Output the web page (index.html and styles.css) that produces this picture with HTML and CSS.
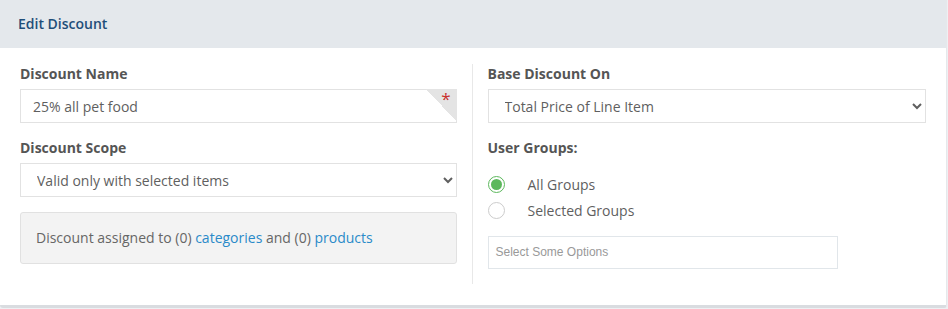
FILE: index.html
```html
<!DOCTYPE html>
<html lang="en">
<head>
    <meta charset="UTF-8">
    <title>Edit Discount</title>
    <link rel="stylesheet" href="styles.css">
</head>
<body>

    <div class="panel">
        <div class="panel-heading">Edit Discount</div>

        <div class="panel-body">
            <!-- Left column -->
            <div class="col col-left">
                <div class="form-group">
                    <label class="field-label">Discount Name</label>
                    <div class="required-wrap">
                        <input type="text" class="form-control" value="25% all pet food">
                        <span class="required-corner"><span class="asterisk">*</span></span>
                    </div>
                </div>

                <div class="form-group">
                    <label class="field-label">Discount Scope</label>
                    <select class="form-control">
                        <option>Valid only with selected items</option>
                    </select>
                </div>

                <div class="info-box">
                    Discount assigned to (0) <a href="#">categories</a> and (0) <a href="#">products</a>
                </div>
            </div>

            <!-- Right column -->
            <div class="col col-right">
                <div class="form-group">
                    <label class="field-label">Base Discount On</label>
                    <select class="form-control">
                        <option>Total Price of Line Item</option>
                    </select>
                </div>

                <div class="form-group">
                    <label class="field-label">User Groups:</label>
                    <div class="radio-list">
                        <label class="radio-row">
                            <span class="radio checked"></span>
                            <span>All Groups</span>
                        </label>
                        <label class="radio-row">
                            <span class="radio"></span>
                            <span>Selected Groups</span>
                        </label>
                    </div>
                    <div class="chosen-box">Select Some Options</div>
                </div>
            </div>
        </div>
    </div>

</body>
</html>
```

FILE: styles.css
```css
/* Reset */
* {
    box-sizing: border-box;
    margin: 0;
    padding: 0;
}

body {
    font-family: 'Open Sans', Arial, sans-serif;
    font-size: 14px;
    color: #555;
    background-color: #eef0f3;
}

/* Panel */
.panel {
    width: 947px;
    background-color: #fff;
    border-right: 1px solid #e6e8eb;
    border-bottom: 3px solid #d9dce0;
    border-radius: 0 0 3px 3px;
}

.panel-heading {
    height: 48px;
    background-color: #e4e8ec;
    color: #1f4e79;
    font-weight: 600;
    font-size: 14px;
    line-height: 48px;
    padding-left: 18px;
}

.panel-body {
    display: flex;
    padding: 16px 20px 21px 20px;
}

.col {
    width: 437px;
}

.col-right {
    margin-left: 15px;
    border-left: 1px solid #e8e8e8;
    padding-left: 15px;
    width: 455px;
}

/* Form fields */
.form-group {
    margin-bottom: 15px;
}

.field-label {
    display: block;
    font-weight: 700;
    color: #555;
    line-height: 20px;
    margin-bottom: 5px;
}

.form-control {
    display: block;
    width: 100%;
    height: 34px;
    border: 1px solid #e2e2e2;
    border-radius: 0;
    background-color: #fff;
    font-family: 'Open Sans', Arial, sans-serif;
    font-size: 14px;
    color: #5f5f5f;
    padding: 0 12px;
    outline: none;
}

.required-wrap {
    position: relative;
}

.required-corner {
    position: absolute;
    top: 0;
    right: 0;
    width: 31px;
    height: 33px;
    background: linear-gradient(to top right, transparent 50%, #e4e4e4 50%);
}

.required-corner .asterisk {
    position: absolute;
    top: 1px;
    right: 6px;
    color: #c9302c;
    font-size: 17px;
    line-height: 17px;
}

/* Info box */
.info-box {
    margin-top: 15px;
    background-color: #f3f3f3;
    border: 1px solid #e1e1e1;
    border-radius: 3px;
    height: 52px;
    line-height: 50px;
    padding-left: 15px;
    color: #666;
}

.info-box a {
    color: #2a8ac9;
    text-decoration: none;
}

/* Radios */
.radio-list {
    padding-top: 8px;
}

.radio-row {
    display: flex;
    align-items: center;
    height: 26px;
    color: #5f5f5f;
}

.radio {
    width: 17px;
    height: 17px;
    border-radius: 50%;
    border: 1px solid #ccc;
    background-color: #fff;
    margin-right: 23px;
    position: relative;
}

.radio.checked {
    border-color: #5cb85c;
}

.radio.checked::after {
    content: '';
    position: absolute;
    top: 2px;
    left: 2px;
    width: 11px;
    height: 11px;
    border-radius: 50%;
    background-color: #5cb85c;
}

.chosen-box {
    margin-top: 13px;
    width: 350px;
    height: 33px;
    border: 1px solid #e1e6ea;
    font-family: Arial, 'Liberation Sans', sans-serif;
    font-size: 12px;
    color: #999;
    line-height: 31px;
    padding-left: 7px;
}
```
